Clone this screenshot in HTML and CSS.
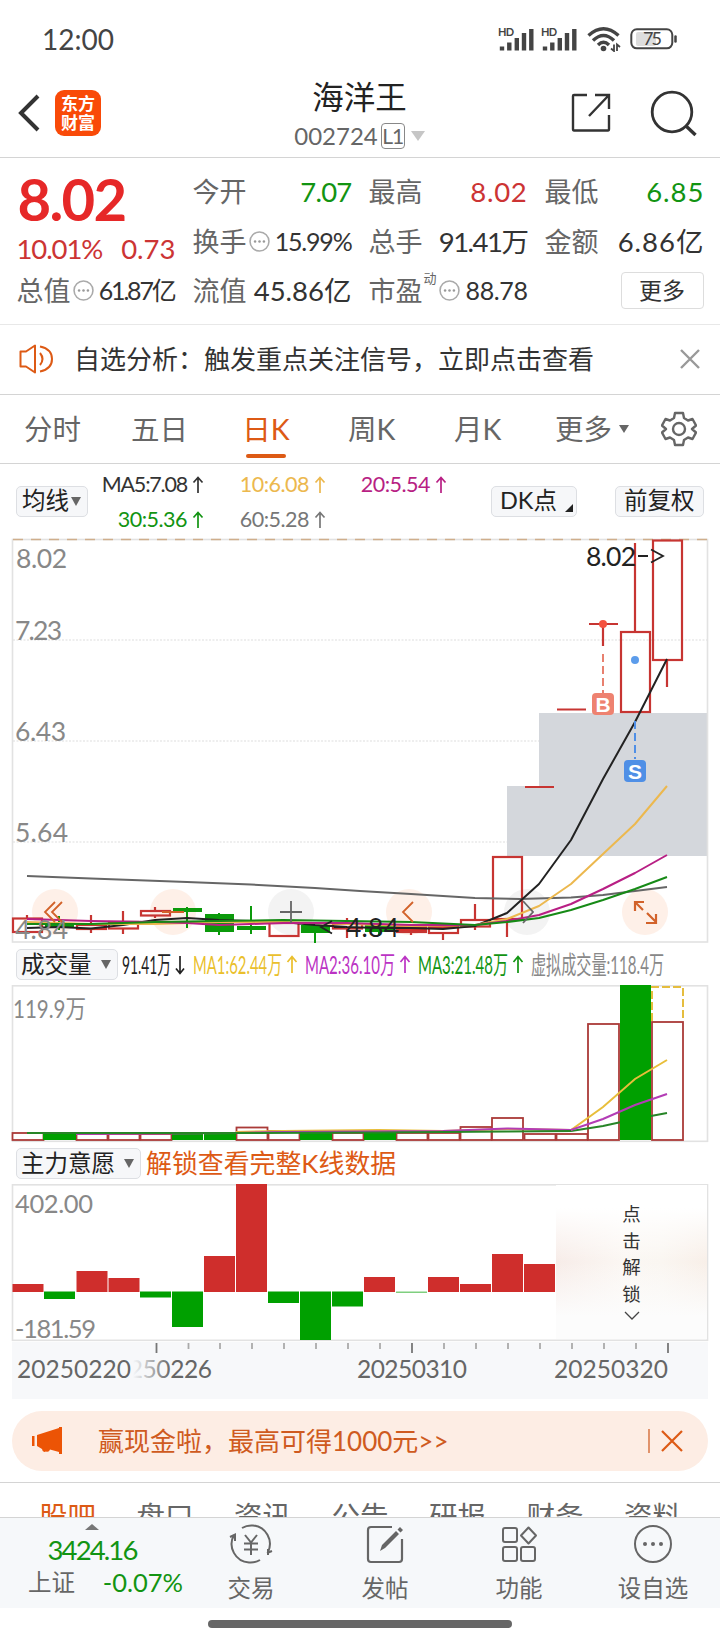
FILE: index.html
```html
<!DOCTYPE html>
<html lang="zh-CN">
<head>
    <meta charset="UTF-8">
    <meta name="viewport" content="width=device-width, initial-scale=1.0">
    <title>海洋王 002724</title>
    <link rel="stylesheet" href="styles.css">
</head>
<body>
    <svg class="defs" width="0" height="0">
        <symbol id="up" viewBox="0 0 12 18"><path d="M6 17V1.5M1.5 6.5L6 1.5L10.5 6.5" fill="none" stroke="currentColor" stroke-width="1.7"/></symbol>
        <symbol id="dots" viewBox="0 0 20 20"><circle cx="10" cy="10" r="9" fill="none" stroke="#aaa" stroke-width="1.5"/><circle cx="5.8" cy="10" r="1.2" fill="#999"/><circle cx="10" cy="10" r="1.2" fill="#999"/><circle cx="14.2" cy="10" r="1.2" fill="#999"/></symbol>
    </svg>

    <div class="status">
        <span class="time">12:00</span>
        <div class="status-icons">
            <svg width="37" height="26" viewBox="0 0 37 26">
                <text x="0" y="10" font-size="11" font-weight="700" textLength="16">HD</text>
                <path d="M4 24.500V20.500M11.300 24.500V16.500M18.800 24.500V12M26 24.500V7M33.300 24.500V3" stroke="#444" stroke-width="4.400"/>
            </svg>
            <svg width="37" height="26" viewBox="0 0 37 26">
                <text x="0" y="10" font-size="11" font-weight="700" textLength="16">HD</text>
                <path d="M4 24.500V20.500M11.300 24.500V16.500M18.800 24.500V12M26 24.500V7M33.300 24.500V3" stroke="#444" stroke-width="4.400"/>
            </svg>
            <svg class="wifi" width="34" height="26" viewBox="0 0 34 26">
                <g fill="none" stroke="#444" stroke-width="3.400">
                    <path d="M1.500 9.500Q16.500 -4 31.500 9.500"/>
                    <path d="M6 14.500Q16.500 4.500 27 14.500"/>
                    <path d="M11 19Q16.500 13.500 22 19"/>
                </g>
                <circle cx="16.500" cy="22.500" r="2.800" fill="#444"/>
                <path d="M27 18.500V25L24 22.500M30 25V18.500L33 21" fill="none" stroke="#444" stroke-width="1.800"/>
            </svg>
            <svg width="48" height="22" viewBox="0 0 48 22">
                <rect x="6" y="4" width="20" height="14" rx="2" fill="#ddd"/>
                <rect x="1.300" y="1.300" width="41" height="19" rx="5.500" fill="none" stroke="#444" stroke-width="2"/>
                <path d="M45.500 8.500V13.500" stroke="#444" stroke-width="2.500" stroke-linecap="round"/>
                <text x="13" y="17" font-size="18" textLength="19">75</text>
            </svg>
        </div>
    </div>

    <header class="header">
        <div class="header-left">
            <svg width="24" height="40" viewBox="0 0 24 40"><path d="M21 3L4 20L21 37" fill="none" stroke="#333" stroke-width="4"/></svg>
            <div class="logo"><span>东方</span><span>财富</span></div>
        </div>
        <div class="header-title">
            <h1>海洋王</h1>
            <div class="code">002724<span class="level">L1</span><svg width="14" height="10"><path d="M0 0H14L7 10Z" fill="#c6c6c6"/></svg></div>
        </div>
        <div class="header-right">
            <svg width="42" height="42" viewBox="0 0 42 42"><path d="M17 3H4Q3 3 3 4V37Q3 38.500 4 38.500H38Q39 38.500 39 37V23M25 3H39V17M39 3L19 24" fill="none" stroke="#333" stroke-width="2.400"/></svg>
            <svg width="48" height="48" viewBox="0 0 48 48"><circle cx="23" cy="23" r="19.800" fill="none" stroke="#333" stroke-width="2.800"/><path d="M37 37L46.500 46" stroke="#333" stroke-width="3.400"/></svg>
        </div>
    </header>

    <section class="quote">
        <div class="quote-main">
            <div class="price">8.02</div>
            <div class="change"><span class="pct">10.01%</span><span>0.73</span></div>
            <div class="cell"><label>总值</label><svg class="tip"><use href="#dots"/></svg><b class="small tighter">61.87亿</b></div>
        </div>
        <div class="quote-col">
            <div class="cell"><label>今开</label><b class="green open">7.07</b></div>
            <div class="cell"><label>换手</label><svg class="tip"><use href="#dots"/></svg><b class="small turnover">15.99%</b></div>
            <div class="cell"><label>流值</label><b>45.86亿</b></div>
        </div>
        <div class="quote-col">
            <div class="cell"><label>最高</label><b class="red wide">8.02</b></div>
            <div class="cell"><label>总手</label><b class="tight">91.41万</b></div>
            <div class="cell"><label>市盈</label><sup>动</sup><svg class="tip"><use href="#dots"/></svg><b class="small pe">88.78</b></div>
        </div>
        <div class="quote-col">
            <div class="cell"><label>最低</label><b class="green wider">6.85</b></div>
            <div class="cell"><label>金额</label><b class="wider">6.86亿</b></div>
            <div class="cell"><button class="more">更多</button></div>
        </div>
    </section>

    <section class="notice">
        <svg width="36" height="30" viewBox="0 0 36 30"><path d="M1.500 7.500H7L16 1.500V28.500L7 22.500H1.500Z" fill="none" stroke="#dd5a15" stroke-width="2" stroke-linejoin="round"/><path d="M21 9Q26 15 21 21M21 2.500Q33 5 33 15T21 27.500" fill="none" stroke="#dd5a15" stroke-width="2"/></svg>
        <span>自选分析：触发重点关注信号，立即点击查看</span>
        <svg class="close" width="20" height="20" viewBox="0 0 20 20"><path d="M1 1L19 19M19 1L1 19" stroke="#999" stroke-width="2.400"/></svg>
    </section>

    <nav class="tabs">
        <a>分时</a>
        <a>五日</a>
        <a class="active">日K</a>
        <a>周K</a>
        <a>月K</a>
        <a>更多<svg width="10" height="8"><path d="M0 0H10L5 8Z" fill="#666"/></svg></a>
        <svg class="gear" width="36" height="36" viewBox="0 0 36 36"><path d="M14 2H22L23 7L27 9.500L31.500 8L35 14.500L31 18L35 21.500L31.500 28L27 26.500L23 29L22 34H14L13 29L9 26.500L4.500 28L1 21.500L5 18L1 14.500L4.500 8L9 9.500L13 7Z" fill="none" stroke="#666" stroke-width="2.400" stroke-linejoin="round"/><circle cx="18" cy="18" r="6" fill="none" stroke="#666" stroke-width="2.400"/></svg>
    </nav>

    <section class="ma-bar">
        <button class="chip">均线<svg width="10" height="9"><path d="M0 0H10L5 9Z" fill="#666"/></svg></button>
        <div class="ma-values">
            <span class="ma5">MA5:7.08<svg><use href="#up"/></svg></span>
            <span class="yellow">10:6.08<svg><use href="#up"/></svg></span>
            <span class="magenta">20:5.54<svg><use href="#up"/></svg></span>
            <span class="green">30:5.36<svg><use href="#up"/></svg></span>
            <span class="grey">60:5.28<svg><use href="#up"/></svg></span>
        </div>
        <button class="chip dk">DK点<svg width="8" height="8"><path d="M8 0V8H0Z" fill="#222"/></svg></button>
        <button class="chip adj">前复权</button>
    </section>

    <!-- K line, 32px per day -->
    <svg class="chart" width="720" height="407" viewBox="0 537 720 407">
        <rect x="539" y="713" width="168" height="74" fill="#d4d7dc"/>
        <rect x="507" y="786" width="200" height="70" fill="#d4d7dc"/>
        <g stroke="#ddd" stroke-dasharray="2 1.500">
            <path d="M13 640H707M13 741H539M13 842H507"/>
        </g>
        <rect x="12.500" y="539.500" width="695" height="402.500" fill="none" stroke="#e2e2e2" stroke-width="1.600"/>
        <path d="M13 539.500H707" stroke="#cfae8c" stroke-width="1.400" stroke-dasharray="10 8"/>

        <g fill="#fef0e8">
            <circle cx="55" cy="912" r="23"/><circle cx="173" cy="912" r="23"/><circle cx="409" cy="912" r="23"/><circle cx="645" cy="912" r="23"/>
        </g>
        <g fill="#f3f3f3"><circle cx="291" cy="912" r="23"/><circle cx="527" cy="912" r="23"/></g>

        <g fill="none" stroke="#c73532" stroke-width="2.200">
            <path d="M27 915V918M91 915V924M91 929V933M123 911V922M123 929V934M155 907V911M155 916V918M347 918V924M347 929V938M411 933V935M443 933V940M475 904V920M475 926V930M507 919V937M603 624V646M635 543V631M667 660V687"/>
            <rect x="13" y="918.500" width="29" height="13.500"/>
            <rect x="77" y="925" width="29" height="4"/>
            <rect x="109" y="922" width="29" height="6.500"/>
            <rect x="141" y="911" width="29" height="4.500"/>
            <rect x="269.500" y="923" width="29" height="13"/>
            <rect x="333" y="924" width="29" height="4.500"/>
            <rect x="397" y="926" width="29" height="6" fill="#d42e2b"/>
            <rect x="429" y="927" width="29" height="6"/>
            <rect x="461" y="920" width="29" height="6.500"/>
            <rect x="493" y="857" width="29" height="62"/>
            <rect x="621" y="632" width="29" height="80"/>
            <rect x="653" y="540.500" width="29" height="119.500"/>
            <path d="M525 787H554M557 709.500H586M589 624H618"/>
        </g>
        <g fill="#0b9a0b">
            <path d="M45 923h29v4h-29zM58 916h2v14h-2zM173 908h29v4h-29zM186 907h2v21h-2zM205 914h29v18h-29zM218 913h2v22h-2zM237 926h29v4h-29zM250 906h2v28h-2zM301 925h29v8h-29zM314 925h2v18h-2zM365 925h29v7h-29zM378 925h2v11h-2z"/>
        </g>
        <g fill="none" stroke-width="2" stroke-linejoin="round">
            <path stroke="#666" d="M27 876L91 878.500L187 882L251 884.500L315 888L360 891L411 894L475 898L520 899L571 897.500L603 895L635 891L667 887"/>
            <path stroke="#222" d="M27 928L59 927L91 928.500L123 925L155 920L187 918L219 920L251 921L283 922L315 925L347 927L379 928L411 928L443 929L475 926L507 913L539 884L571 840L603 779L635 722L667 659"/>
            <path stroke="#ecb84e" d="M27 922L59 923L91 924L155 924L219 922L283 922L347 924L411 926L475 925L507 919L539 906L571 884L603 854L635 824L667 786"/>
            <path stroke="#b81f84" d="M27 919L91 921L155 922L187 923L219 925L251 924L283 923L347 923L411 925L475 925L507 921L539 915L571 904L603 889L635 873L667 855"/>
            <path stroke="#168a16" d="M27 924L91 924L155 922L219 921L283 920L347 921L411 922L475 925L507 922L539 918L571 910L603 900L635 889L667 877"/>
        </g>
        <g class="axis" font-size="26.500">
            <text x="16" y="568" textLength="51">8.02</text>
            <text x="15" y="640" textLength="47">7.23</text>
            <text x="15" y="741" textLength="51">6.43</text>
            <text x="15" y="842" textLength="53">5.64</text>
            <text x="15" y="939" textLength="53">4.84</text>
        </g>
        <text x="586" y="566" font-size="26.500" fill="#222" textLength="50">8.02</text>
        <text x="346" y="937" font-size="26.500" fill="#222" textLength="53">4.84</text>
        <g fill="none" stroke="#222" stroke-width="1.800">
            <path d="M638 556H648M651 549.500L663 556L651 562.500M332 921L321 927L332 933.500M334 927H345"/>
        </g>

        <circle cx="603" cy="624" r="4" fill="#f4523f"/>
        <path d="M603 654V693" stroke="#e8806f" stroke-width="2" stroke-dasharray="8 4"/>
        <rect class="tag-b" x="592" y="693" width="22" height="22" rx="4"/>
        <text class="tag" x="603" y="712">B</text>
        <circle cx="635" cy="660" r="4" fill="#5c9ceb"/>
        <path d="M635 721V759" stroke="#4f8fe6" stroke-width="2" stroke-dasharray="8 4"/>
        <rect class="tag-s" x="624" y="760" width="22" height="22" rx="4"/>
        <text class="tag" x="635" y="779">S</text>

        <g fill="none" stroke="#d2622a" stroke-width="1.800">
            <path d="M55 902L45 912L55 922M62 902L52 912L62 922M413 902L403 912L413 922M162 912H184"/>
            <path stroke-width="2.200" d="M635 911V902H644M635 902L643 910M646 923H656V914M647 913L656 922"/>
        </g>
        <path d="M280 912H302M291 901V923M523 901L533 912L523 923" fill="none" stroke="#666" stroke-width="1.800"/>
    </svg>

    <section class="sub-bar">
        <button class="chip">成交量<svg width="10" height="9"><path d="M0 0H10L5 9Z" fill="#666"/></svg></button>
        <svg class="legend" width="590" height="42" viewBox="118 944 590 42" font-size="25">
            <g color="#222"><text x="122" y="974" textLength="49" lengthAdjust="spacingAndGlyphs">91.41万</text><path d="M180 956V973M176 968.500L180 973.500L184 968.500"/></g>
            <g color="#eabf2c"><text x="193" y="974" textLength="89" lengthAdjust="spacingAndGlyphs">MA1:62.44万</text><path d="M292 973V957M287.500 962L292 956.500L296.500 962"/></g>
            <g color="#bb33c4"><text x="305" y="974" textLength="90" lengthAdjust="spacingAndGlyphs">MA2:36.10万</text><path d="M405 973V957M400.500 962L405 956.500L409.500 962"/></g>
            <g color="#129412"><text x="418" y="974" textLength="90" lengthAdjust="spacingAndGlyphs">MA3:21.48万</text><path d="M518 973V957M513.500 962L518 956.500L522.500 962"/></g>
            <g color="#888"><text x="531" y="974" textLength="133" lengthAdjust="spacingAndGlyphs">虚拟成交量:118.4万</text></g>
        </svg>
    </section>

    <svg class="chart" width="720" height="158" viewBox="0 985 720 158">
        <rect x="12.500" y="985.800" width="695" height="155.500" fill="none" stroke="#e2e2e2" stroke-width="1.600"/>
        <text class="axis" x="13" y="1018" font-size="25" textLength="73" lengthAdjust="spacingAndGlyphs">119.9万</text>
        <g fill="#fff" stroke="#aa3a38" stroke-width="1.800">
            <rect x="12.500" y="1133" width="31" height="7"/>
            <rect x="76.500" y="1134" width="31" height="6"/>
            <rect x="108.500" y="1134" width="31" height="6"/>
            <rect x="140.500" y="1134" width="31" height="6"/>
            <rect x="236.500" y="1127.500" width="31" height="12.500"/>
            <rect x="268.500" y="1131" width="31" height="9"/>
            <rect x="332.500" y="1133" width="31" height="7"/>
            <rect x="396.500" y="1133" width="31" height="7"/>
            <rect x="428.500" y="1133" width="31" height="7"/>
            <rect x="460.500" y="1127" width="31" height="13"/>
            <rect x="492" y="1118" width="31" height="22"/>
            <rect x="524.500" y="1134" width="31" height="6"/>
            <rect x="556.500" y="1134" width="31" height="6"/>
            <rect x="588" y="1024" width="31" height="116"/>
            <rect x="652" y="1022" width="31" height="118"/>
        </g>
        <path d="M652 1021V987H683V1021" fill="none" stroke="#e5bd3e" stroke-width="2" stroke-dasharray="8 3"/>
        <path fill="#00a000" d="M43 1134h33v6h-33zM172 1134h31v6h-31zM204 1133h32v7h-32zM300 1133h32v7h-32zM364 1133h32v7h-32z"/>
        <path fill="none" stroke="#278527" stroke-width="2" d="M571 1131L603 1126L635 1119L667 1113"/>
        <rect x="620" y="985" width="31" height="155" fill="#00a000"/>
        <g fill="none" stroke-width="2">
            <path stroke="#e8be3a" d="M236 1132L283 1131L379 1130L443 1131L507 1129L571 1130L603 1107L635 1079L667 1060"/>
            <path stroke="#b33cb5" d="M76 1134L236 1133L283 1132L443 1131L507 1128.500L571 1130L603 1119L635 1105L667 1094"/>
            <path stroke="#278527" d="M27 1133H251L379 1132.500L507 1131.500L571 1131"/>
        </g>
    </svg>

    <section class="sub-bar second">
        <button class="chip">主力意愿<svg width="10" height="9"><path d="M0 0H10L5 9Z" fill="#666"/></svg></button>
        <span class="unlock">解锁查看完整K线数据</span>
    </section>

    <div class="will">
        <svg class="chart" width="720" height="158" viewBox="0 1184 720 158">
            <rect x="12.500" y="1184.800" width="695" height="155.500" fill="none" stroke="#e2e2e2" stroke-width="1.600"/>
            <g fill="#cf2e2c">
                <rect x="12.500" y="1284" width="31" height="8"/>
                <rect x="76.500" y="1271" width="31" height="21"/>
                <rect x="108.500" y="1278" width="31" height="14"/>
                <rect x="204" y="1256" width="31" height="36"/>
                <rect x="236" y="1184" width="31" height="108"/>
                <rect x="364" y="1277" width="31" height="15"/>
                <rect x="428" y="1277" width="31" height="15"/>
                <rect x="460" y="1284" width="31" height="8"/>
                <rect x="492" y="1254" width="31" height="38"/>
                <rect x="524" y="1264" width="31" height="28"/>
            </g>
            <g fill="#00a000">
                <rect x="44" y="1291.500" width="31" height="7.500"/>
                <rect x="140" y="1291.500" width="31" height="6"/>
                <rect x="172" y="1291.500" width="31" height="35.500"/>
                <rect x="268" y="1291.500" width="31" height="11.500"/>
                <rect x="300" y="1291.500" width="31" height="48.500"/>
                <rect x="332" y="1291.500" width="31" height="15"/>
                <rect x="396" y="1291.500" width="31" height="1.500" opacity=".5"/>
            </g>
            <text class="axis" x="15" y="1212.500" font-size="25.500" textLength="78">402.00</text>
            <text class="axis" x="15" y="1338" font-size="25.500" textLength="81">-181.59</text>
        </svg>
        <div class="lock">
            <span>点</span><span>击</span><span>解</span><span>锁</span>
            <svg width="16" height="9" viewBox="0 0 16 9"><path d="M1 1L8 8L15 1" fill="none" stroke="#444" stroke-width="1.300"/></svg>
        </div>
    </div>

    <svg class="chart" width="720" height="57" viewBox="0 1342 720 57" font-size="24.500">
        <defs>
            <linearGradient id="fade"><stop offset="0" stop-color="#f7f8fa"/><stop offset="1" stop-color="#f7f8fa" stop-opacity="0"/></linearGradient>
        </defs>
        <rect x="12" y="1342" width="696" height="57" fill="#f7f8fa"/>
        <path d="M156.500 1343v10M412 1343v10M668 1343v10" stroke="#777" stroke-width="1.800"/>
        <path d="M188.500 1343v6M220 1343v6M252 1343v6M284 1343v6M316 1343v6M348 1343v6M380 1343v6M444 1343v6M476 1343v6M508 1343v6M540 1343v6M572 1343v6M604 1343v6M636 1343v6" stroke="#aaa" stroke-width="1.800"/>
        <g fill="#666">
            <text x="101" y="1378" textLength="111">20250226</text>
            <rect x="13" y="1355" width="120" height="40" fill="#f7f8fa"/>
            <rect x="133" y="1355" width="38" height="40" fill="url(#fade)"/>
            <text x="17" y="1378" textLength="114">20250220</text>
            <text x="357" y="1378" textLength="110">20250310</text>
            <text x="554" y="1378" textLength="114">20250320</text>
        </g>
    </svg>

    <div class="promo">
        <svg width="32" height="28" viewBox="0 0 32 28"><path d="M1 9V19H3.500V9ZM6 8L28 1V0H31V27H28V25L19 22.500Q18 25.500 15 24.500Q11.500 26 11 22L6 19Z" fill="#ec5405"/></svg>
        <span>赢现金啦，最高可得1000元&gt;&gt;</span>
        <svg class="promo-close" width="36" height="26" viewBox="0 0 36 26"><path d="M1 1V25" stroke="#d2622a" stroke-width="1.300"/><path d="M14 3L34 23M34 3L14 23" stroke="#dd5a15" stroke-width="2.200"/></svg>
    </div>

    <nav class="sections">
        <a class="active">股吧</a><a>盘口</a><a>资讯</a><a>公告</a><a>研报</a><a>财务</a><a>资料</a>
    </nav>

    <footer class="toolbar">
        <div class="index">
            <svg width="14" height="6"><path d="M0 6L7 0L14 6Z" fill="#777"/></svg>
            <div class="index-value">3424.16</div>
            <div class="index-row"><span>上证</span><span class="green">-0.07%</span></div>
        </div>
        <div class="tool">
            <svg width="44" height="40" viewBox="0 0 44 40"><g fill="none" stroke="#666" stroke-width="2"><path d="M13 4Q18 1 24 1.500A18.500 18.500 0 0 1 39 28M39 31V25M38 29L43 27M31 36Q26 39 20 38.500A18.500 18.500 0 0 1 5 11M1 13L6 10.500V17"/><path d="M16 11L22 18.500L28 11M22 18.500V31M15 19.500H29M15 25.500H29"/></g></svg>
            <span>交易</span>
        </div>
        <div class="tool">
            <svg width="40" height="40" viewBox="0 0 40 40"><path d="M27 3H6Q3 3 3 6V35Q3 38 6 38H34Q37 38 37 35V15" fill="none" stroke="#666" stroke-width="2.200"/><path d="M15 27L17 21L31 7L34 10L20 24ZM32.500 5.500L35 3L38 6L35.500 8.500Z" fill="#666"/></svg>
            <span>发帖</span>
        </div>
        <div class="tool">
            <svg width="40" height="40" viewBox="0 0 40 40"><g fill="none" stroke="#666" stroke-width="2"><rect x="4" y="4" width="14" height="14" rx="2"/><rect x="4" y="23" width="14" height="14" rx="2"/><rect x="22" y="23" width="14" height="14" rx="2"/><path d="M29.500 3.500L37 11.500L29.500 19.500L22 11.500Z" stroke-linejoin="round"/></g></svg>
            <span>功能</span>
        </div>
        <div class="tool">
            <svg width="40" height="40" viewBox="0 0 40 40"><circle cx="20" cy="20" r="18" fill="none" stroke="#666" stroke-width="2"/><circle cx="12" cy="20" r="2" fill="#666"/><circle cx="20" cy="20" r="2" fill="#666"/><circle cx="28" cy="20" r="2" fill="#666"/></svg>
            <span>设自选</span>
        </div>
    </footer>
    <div class="home"><i></i></div>
</body>
</html>
```
FILE: styles.css
```css
* {
    margin: 0;
    padding: 0;
    box-sizing: border-box;
}
body {
    width: 720px;
    height: 1640px;
    overflow: hidden;
    background-color: #fff;
    color: #333;
    font-family: Lato, "Noto Sans CJK SC", sans-serif;
    line-height: 1;
    white-space: nowrap;
}
svg {
    display: block;
    flex-shrink: 0;
}
.defs {
    position: absolute;
}
.red { color: #cc3434; }
.green { color: #129412; }
.yellow { color: #ecb84e; }
.magenta { color: #b81f84; }
.grey { color: #777; }

/* status bar */
.status {
    height: 78px;
    display: flex;
    justify-content: space-between;
    align-items: center;
    padding: 0 42px 0 42px;
    color: #444;
    fill: #444;
}
.time {
    font-size: 28px;
}
.status-icons {
    display: flex;
    align-items: center;
    gap: 6px;
}
.wifi {
    margin: 0 3px;
}

/* header */
.header {
    height: 80px;
    border-bottom: 1px solid #d4d4d4;
    display: grid;
    grid-template-columns: 1fr 160px 1fr;
    padding: 0 23px 0 17px;
}
.header-left {
    display: flex;
    align-items: center;
    gap: 14px;
    padding-bottom: 10px;
}
.logo {
    width: 46px;
    height: 46px;
    border-radius: 9px;
    background-color: #f94a08;
    color: #fff;
    font-size: 17px;
    font-weight: 700;
    display: flex;
    flex-direction: column;
    align-items: center;
    justify-content: center;
    gap: 2px;
}
.header-title {
    padding: 3px 0 0 5px;
}
.header-title h1 {
    font-size: 31.5px;
    font-weight: 400;
    line-height: 32px;
    text-align: center;
    color: #222;
}
.code {
    display: flex;
    align-items: center;
    justify-content: center;
    margin-top: 10px;
    font-size: 24px;
    color: #666;
    height: 26px;
}
.level {
    border: 1.5px solid #888;
    border-radius: 4px;
    height: 26px;
    width: 24px;
    margin: 0 6px 0 3px;
    font-size: 21px;
    line-height: 23px;
    letter-spacing: -1px;
    text-align: center;
}
.header-right {
    display: flex;
    align-items: center;
    justify-content: flex-end;
    gap: 37px;
    padding-bottom: 10px;
}

/* quote */
.quote {
    height: 167px;
    border-bottom: 1px solid #e8e8e8;
    display: grid;
    grid-template-columns: repeat(4, 158px);
    gap: 18px;
    padding: 9px 16px 0 17px;
    justify-content: center;
}
.quote-col {
    display: grid;
    grid-template-rows: repeat(3, 49.500px);
    align-content: start;
}
.price {
    height: 64px;
    font-size: 58px;
    font-weight: 700;
    line-height: 63px;
    letter-spacing: -1.7px;
    color: #e62828;
}
.change {
    display: flex;
    justify-content: space-between;
    align-items: center;
    height: 35px;
    margin-left: -1px;
    padding-top: 1px;
    font-size: 27.500px;
    color: #cc3434;
}
.pct {
    letter-spacing: -1.1px;
}
.cell {
    height: 49.5px;
    display: flex;
    align-items: center;
}
.cell label {
    font-size: 27px;
    margin-left: -1px;
    color: #666;
}
.cell b {
    margin-left: auto;
    font-size: 27.5px;
    font-weight: 400;
}
.cell .small {
    font-size: 25px;
}
.cell .tight {
    letter-spacing: -1.5px;
}
.cell .tighter {
    letter-spacing: -2.2px;
    margin-right: 1px;
}
.cell .open {
    letter-spacing: -.8px;
}
.cell .turnover {
    letter-spacing: -1.2px;
}
.cell .pe {
    letter-spacing: -.4px;
}
.cell .wide {
    letter-spacing: .7px;
}
.cell .wider {
    letter-spacing: 1px;
    margin-right: -1px;
}
.cell sup {
    font-size: 13px;
    color: #666;
    align-self: flex-start;
    margin: 6px 0 0 1px;
}
.tip {
    width: 21px;
    height: 21px;
    margin-left: 2px;
}
.more {
    margin-left: auto;
    width: 83px;
    height: 37px;
    border: 1px solid #ddd;
    border-radius: 4px;
    background-color: #fff;
    font: 23px Lato, "Noto Sans CJK SC", sans-serif;
    line-height: 1;
    color: #333;
}

/* notice */
.notice {
    height: 70px;
    border-bottom: 1px solid #d4d4d4;
    display: flex;
    align-items: center;
    gap: 19px;
    padding: 0 20px 1px 19px;
    font-size: 26px;
}
.close {
    margin-left: auto;
}

/* period tabs */
.tabs {
    height: 69px;
    border-bottom: 1px solid #d4d4d4;
    display: grid;
    grid-template-columns: 107px 112px 105px 106px 101px 106px 36px;
    align-items: center;
    padding-left: 24px;
    font-size: 28.500px;
    color: #666;
}
.tabs a {
    display: flex;
    align-items: center;
    gap: 7px;
    height: 100%;
}
.tabs .active {
    width: 46px;
    flex-direction: column;
    gap: 0;
    line-height: 60px;
    padding-top: 4px;
    color: #dd5a15;
}
.tabs .active::after {
    content: "";
    width: 40px;
    height: 4px;
    margin-top: -5px;
    border-radius: 2px;
    background-color: #dd5a15;
}

/* moving averages */
.ma-bar {
    height: 73px;
    display: flex;
    align-items: center;
    padding: 0 16px;
}
.chip {
    height: 31px;
    border: 1px solid #dddfe3;
    border-radius: 5px;
    background-color: #f6f7f9;
    display: flex;
    align-items: center;
    justify-content: space-between;
    padding: 0 6px 0 5px;
    font: 23.500px Lato, "Noto Sans CJK SC", sans-serif;
    line-height: 1;
    color: #222;
    flex-shrink: 0;
}
.ma-bar .chip {
    width: 72px;
    margin-top: 1px;
}
.ma-values {
    width: 357px;
    display: grid;
    grid-template-columns: 116px 122px 121px;
    grid-auto-rows: 35px;
    padding-top: 4px;
    font-size: 21.5px;
    letter-spacing: -.5px;
}
.ma-values span {
    display: flex;
    align-items: center;
    justify-content: flex-end;
    gap: 5px;
}
.ma-values .ma5 {
    letter-spacing: -1.2px;
}
.ma-values svg {
    width: 12px;
    height: 18px;
}
.ma-bar .dk {
    width: 86px;
    margin-left: 46px;
    padding: 0 3px 0 8px;
}
.dk svg {
    margin-top: 14px;
}
.ma-bar .adj {
    width: 89px;
    margin-left: auto;
    padding: 0 8px;
}

/* charts */
.chart text, .legend text, .status text {
    font-family: Lato, "Noto Sans CJK SC", sans-serif;
}
.axis {
    fill: #888;
}
.chart .tag {
    font-family: "Liberation Sans", sans-serif;
    font-size: 21px;
    font-weight: 700;
    text-anchor: middle;
    fill: #fff;
}
.tag-b { fill: #ee8270; }
.tag-s { fill: #4f8fe6; }
.sub-bar {
    height: 41px;
    display: flex;
    align-items: center;
    padding-left: 16px;
}
.sub-bar .chip {
    width: 102px;
    padding-left: 4px;
}
.legend g {
    fill: currentColor;
}
.legend path {
    fill: none;
    stroke: currentColor;
    stroke-width: 1.700;
}
.second .chip {
    width: 125px;
}
.unlock {
    margin-left: 5px;
    font-size: 25.900px;
    color: #dd5a15;
}
.will {
    position: relative;
}
.lock {
    position: absolute;
    left: 556px;
    top: 1px;
    width: 151px;
    height: 154px;
    background: linear-gradient(to bottom, #fff 15%, rgba(255,255,255,0) 50%, #fcfcfc 85%), linear-gradient(to right, #f7ece8, #fbf7f3 45%, #faf6f1 70%, #f8efe8);
    display: flex;
    flex-direction: column;
    align-items: center;
    padding-top: 16px;
    font-size: 18.500px;
    line-height: 26.500px;
}
.lock svg {
    margin-top: 4px;
}

/* promo */
.promo {
    height: 60px;
    margin: 12px 12px 11px;
    border-radius: 30px;
    background-color: #fdede4;
    display: flex;
    align-items: center;
    padding: 0 24px 0 19px;
    font-size: 26px;
    color: #cf5a20;
}
.promo span {
    margin-left: 35px;
}
.promo-close {
    margin-left: auto;
}

.sections {
    height: 35px;
    border-top: 1px solid #d4d4d4;
    overflow: hidden;
    display: grid;
    grid-template-columns: repeat(7, 97.500px);
    justify-content: center;
    padding-top: 19px;
    font-size: 28.500px;
    text-align: center;
    color: #666;
}
.sections .active {
    color: #dd5a15;
}

/* toolbar */
.toolbar {
    height: 91px;
    border-top: 1px solid #d4d4d4;
    background-color: #f6f8fa;
    display: grid;
    grid-template-columns: 184px repeat(4, 134px);
    color: #666;
}
.index {
    display: flex;
    flex-direction: column;
    align-items: center;
    padding-top: 6px;
}
.index-value {
    margin-top: 6px;
    font-size: 27.5px;
    letter-spacing: -1.9px;
    color: #129412;
}
.index-row {
    width: 100%;
    display: flex;
    justify-content: space-between;
    align-items: center;
    margin-top: 6px;
    padding: 0 1px 0 28px;
    font-size: 25.5px;
}
.index-row span:first-child {
    font-size: 23.500px;
}
.tool {
    display: flex;
    flex-direction: column;
    align-items: center;
    padding-top: 6px;
    font-size: 23.500px;
}
.tool span {
    margin-top: 13px;
}
.home {
    height: 32px;
    display: flex;
    justify-content: center;
    padding-top: 12px;
}
.home i {
    width: 304px;
    height: 8px;
    border-radius: 4px;
    background-color: #666;
}
```
